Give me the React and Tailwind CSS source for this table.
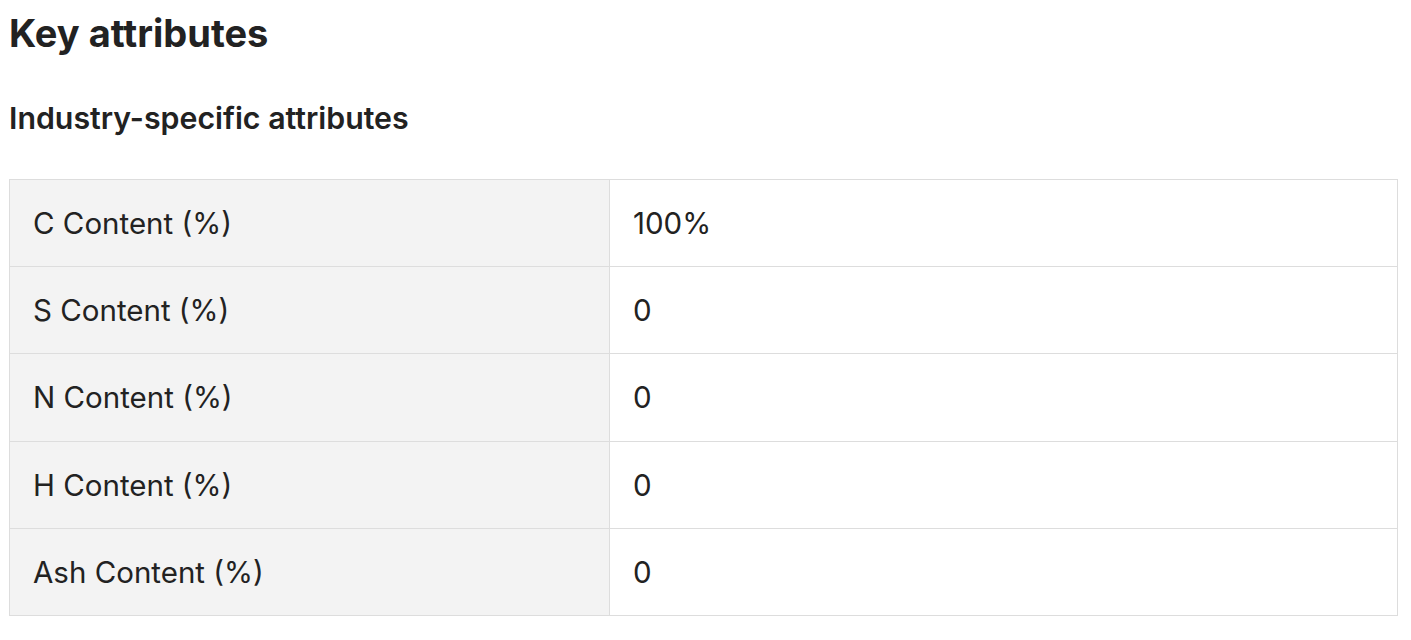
export default function App() {
  const rows = [
    ["C Content (%)", "100%"],
    ["S Content (%)", "0"],
    ["N Content (%)", "0"],
    ["H Content (%)", "0"],
    ["Ash Content (%)", "0"],
  ];
  return (
    <div className="bg-white w-[1411px] h-[640px] pl-[9px] pr-[13px] text-[#222]" style={{ fontFamily: "Inter, sans-serif" }}>
      <h1 className="text-[38px] font-bold leading-[46px] pt-[10px]">Key attributes</h1>
      <h2 className="text-[30.3px] font-semibold leading-[36px] mt-[44px]">Industry-specific attributes</h2>
      <div className="mt-[43px] border-t border-l border-[#dddddd]">
        {rows.map(([k, v]) => (
          <div key={k} className="flex h-[87.2px] border-b border-[#dddddd]">
            <div className="w-[600px] bg-[#f3f3f3] border-r border-[#dddddd] flex items-center px-[23px] text-[29.5px]">{k}</div>
            <div className="flex-1 border-r border-[#dddddd] flex items-center px-[23px] text-[29.5px]">{v}</div>
          </div>
        ))}
      </div>
    </div>
  );
}
